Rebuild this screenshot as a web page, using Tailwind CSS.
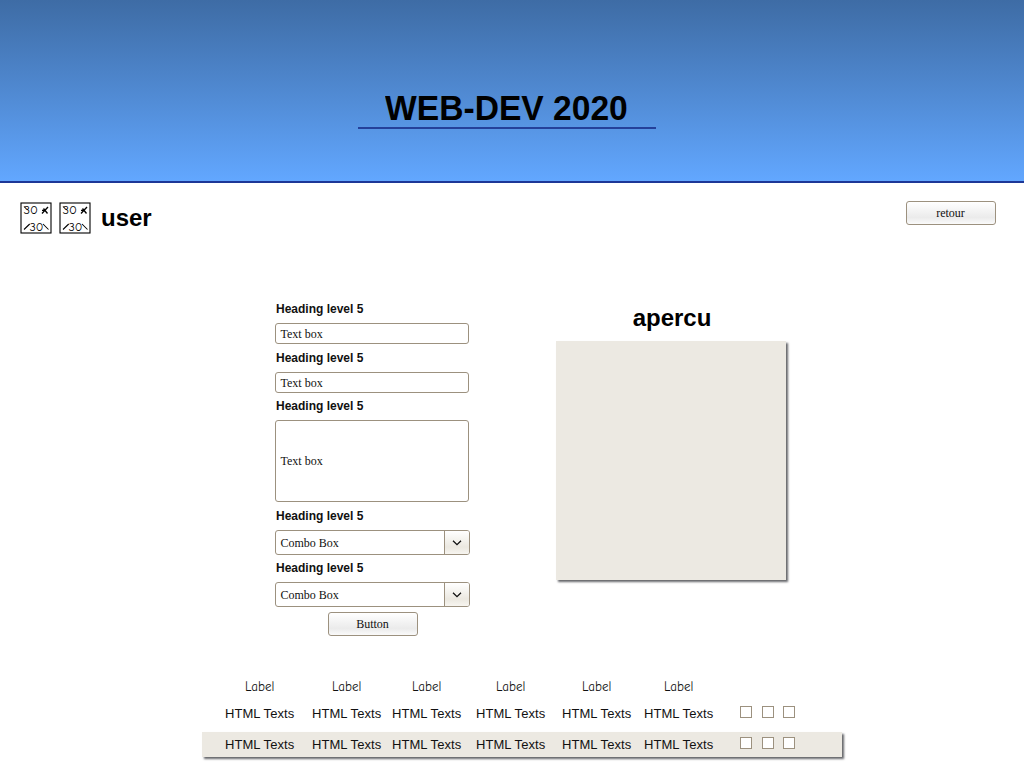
<!DOCTYPE html>
<html lang="fr">
<head>
<meta charset="utf-8">
<title>WEB-DEV 2020</title>
<script src="https://cdn.jsdelivr.net/npm/@tailwindcss/browser@4"></script>
</head>
<body class="bg-white text-black font-['Liberation_Sans',sans-serif] w-[1024px] h-[768px] overflow-hidden">
<svg class="hidden">
  <symbol id="thumb" viewBox="0 0 32 32">
    <rect x="1" y="1" width="30" height="30" fill="#fff" stroke="#000" stroke-width="1.1"/>
    <g class="font-['Comic_Neue','Comic_Sans_MS',Lato,sans-serif] text-[12.5px]" fill="#000">
      <text x="3.5" y="11.8" textLength="14.5" lengthAdjust="spacingAndGlyphs">30</text>
      <text x="9.5" y="29" textLength="14" lengthAdjust="spacingAndGlyphs">30</text>
    </g>
    <g fill="none" stroke="#000" stroke-width="1.05">
      <path d="M4 4.5L6.5 7"/>
      <path stroke-width="1.3" d="M22 11.5L28 5M22 8.3H25.5M23.5 6.5L27.5 11.5"/>
      <path d="M4 27.5L9.7 22M23 22L28.5 27.5"/>
    </g>
  </symbol>
</svg>

<header class="h-[183px] border-b-2 border-[#1d3797] bg-linear-to-b from-[#3e6ca5] to-[#62a7ff] flex justify-center pr-[11px] pt-[86px]">
  <h1 class="w-[298px] h-[42.5px] border-b-2 border-[#24409a] text-center text-[35px] leading-[43px] font-bold whitespace-nowrap"><span class="inline-block scale-x-[0.96]">WEB-DEV 2020</span></h1>
</header>

<div class="flex h-[118px] pl-5 pr-7 pt-[18px]">
  <svg class="w-8 h-8 mt-px"><use href="#thumb"/></svg>
  <svg class="w-8 h-8 mt-px ml-[7px]"><use href="#thumb"/></svg>
  <h2 class="ml-[10px] text-2xl leading-[34px] font-bold">user</h2>
  <button class="ml-auto w-[90px] h-6 rounded-[3px] border border-[#9c917f] bg-linear-to-b from-white via-[#ebebeb] via-70% to-[#fafafa] font-['Liberation_Serif',serif] text-xs pr-px text-[#111]">retour</button>
</div>

<main class="flex h-[373px] pl-[275px]">
  <form class="w-[195px] text-xs text-[#111]">
    <h5 class="pl-px h-[22px] leading-4 font-bold">Heading level 5</h5>
    <div class="w-[194px] h-[21px] rounded-[3px] border border-[#9c917f] pl-[4.5px] leading-5 font-['Liberation_Serif',serif]">Text box</div>
    <h5 class="pl-px pt-[6px] h-7 leading-4 font-bold">Heading level 5</h5>
    <div class="w-[194px] h-[21px] rounded-[3px] border border-[#9c917f] pl-[4.5px] leading-5 font-['Liberation_Serif',serif]">Text box</div>
    <h5 class="pl-px pt-[5px] h-[27px] leading-4 font-bold">Heading level 5</h5>
    <div class="w-[194px] h-[82px] rounded-[3px] border border-[#9c917f] pl-[4.5px] leading-[80px] font-['Liberation_Serif',serif]">Text box</div>
    <h5 class="pl-px pt-[6px] h-7 leading-4 font-bold">Heading level 5</h5>
    <div class="flex h-[25px] rounded-[3px] border border-[#9c917f] overflow-hidden font-['Liberation_Serif',serif]">
      <span class="flex-1 pl-[4.5px] leading-6">Combo Box</span>
      <span class="w-[25px] border-l border-[#9c917f] bg-linear-to-b from-white via-[#ebe8e0] via-70% to-[#f7f5f0] flex items-center justify-center"><svg class="w-[10px] h-[6px] mt-px" viewBox="0 0 10 6" fill="none" stroke="#111" stroke-width="1.3"><path d="M1 .7L5 4.7L9 .7"/></svg></span>
    </div>
    <h5 class="pl-px pt-[5px] h-[27px] leading-4 font-bold">Heading level 5</h5>
    <div class="flex h-[25px] rounded-[3px] border border-[#9c917f] overflow-hidden font-['Liberation_Serif',serif]">
      <span class="flex-1 pl-[4.5px] leading-6">Combo Box</span>
      <span class="w-[25px] border-l border-[#9c917f] bg-linear-to-b from-white via-[#ebe8e0] via-70% to-[#f7f5f0] flex items-center justify-center"><svg class="w-[10px] h-[6px] mt-px" viewBox="0 0 10 6" fill="none" stroke="#111" stroke-width="1.3"><path d="M1 .7L5 4.7L9 .7"/></svg></span>
    </div>
    <button type="button" class="block ml-[53px] mt-[5px] w-[90px] h-6 rounded-[3px] border border-[#9c917f] bg-linear-to-b from-white via-[#ebebeb] via-70% to-[#fafafa] font-['Liberation_Serif',serif] text-xs pr-px">Button</button>
  </form>
  <section class="ml-[86px] w-[230px]">
    <h2 class="h-10 pl-[2px] text-center text-2xl leading-[34px] font-bold">apercu</h2>
    <div class="h-[239px] bg-[#ece9e2] shadow-[2px_2px_2px_#66676b]"></div>
  </section>
</main>

<section class="ml-[202px] w-[640px] text-[13px] text-[#111]">
  <div class="grid grid-cols-[87px_80px_84px_86px_82px_70px] pl-[23px] h-[26px] leading-[26px] text-[13px] text-[#111] font-['Comic_Neue','Comic_Sans_MS',Lato,sans-serif]">
    <span class="pl-5">Label</span><span class="pl-5">Label</span><span class="pl-5">Label</span><span class="pl-5">Label</span><span class="pl-5">Label</span><span class="pl-5">Label</span>
  </div>
  <div class="grid grid-cols-[87px_80px_84px_86px_82px_96px_22px_21px_12px] pl-[23px] h-[32px] leading-7 tracking-[0.06px] whitespace-nowrap">
    <span>HTML Texts</span><span>HTML Texts</span><span>HTML Texts</span><span>HTML Texts</span><span>HTML Texts</span><span>HTML Texts</span>
    <i class="mt-[6px] size-3 border border-[#9c917f] bg-white"></i><i class="mt-[6px] size-3 border border-[#9c917f] bg-white"></i><i class="mt-[6px] size-3 border border-[#9c917f] bg-white"></i>
  </div>
  <div class="grid grid-cols-[87px_80px_84px_86px_82px_96px_22px_21px_12px] pl-[23px] h-[25px] leading-[25px] tracking-[0.06px] whitespace-nowrap bg-[#ece9e2] shadow-[2px_2px_2px_#66676b]">
    <span>HTML Texts</span><span>HTML Texts</span><span>HTML Texts</span><span>HTML Texts</span><span>HTML Texts</span><span>HTML Texts</span>
    <i class="mt-[5px] size-3 border border-[#9c917f] bg-white"></i><i class="mt-[5px] size-3 border border-[#9c917f] bg-white"></i><i class="mt-[5px] size-3 border border-[#9c917f] bg-white"></i>
  </div>
</section>
</body>
</html>
